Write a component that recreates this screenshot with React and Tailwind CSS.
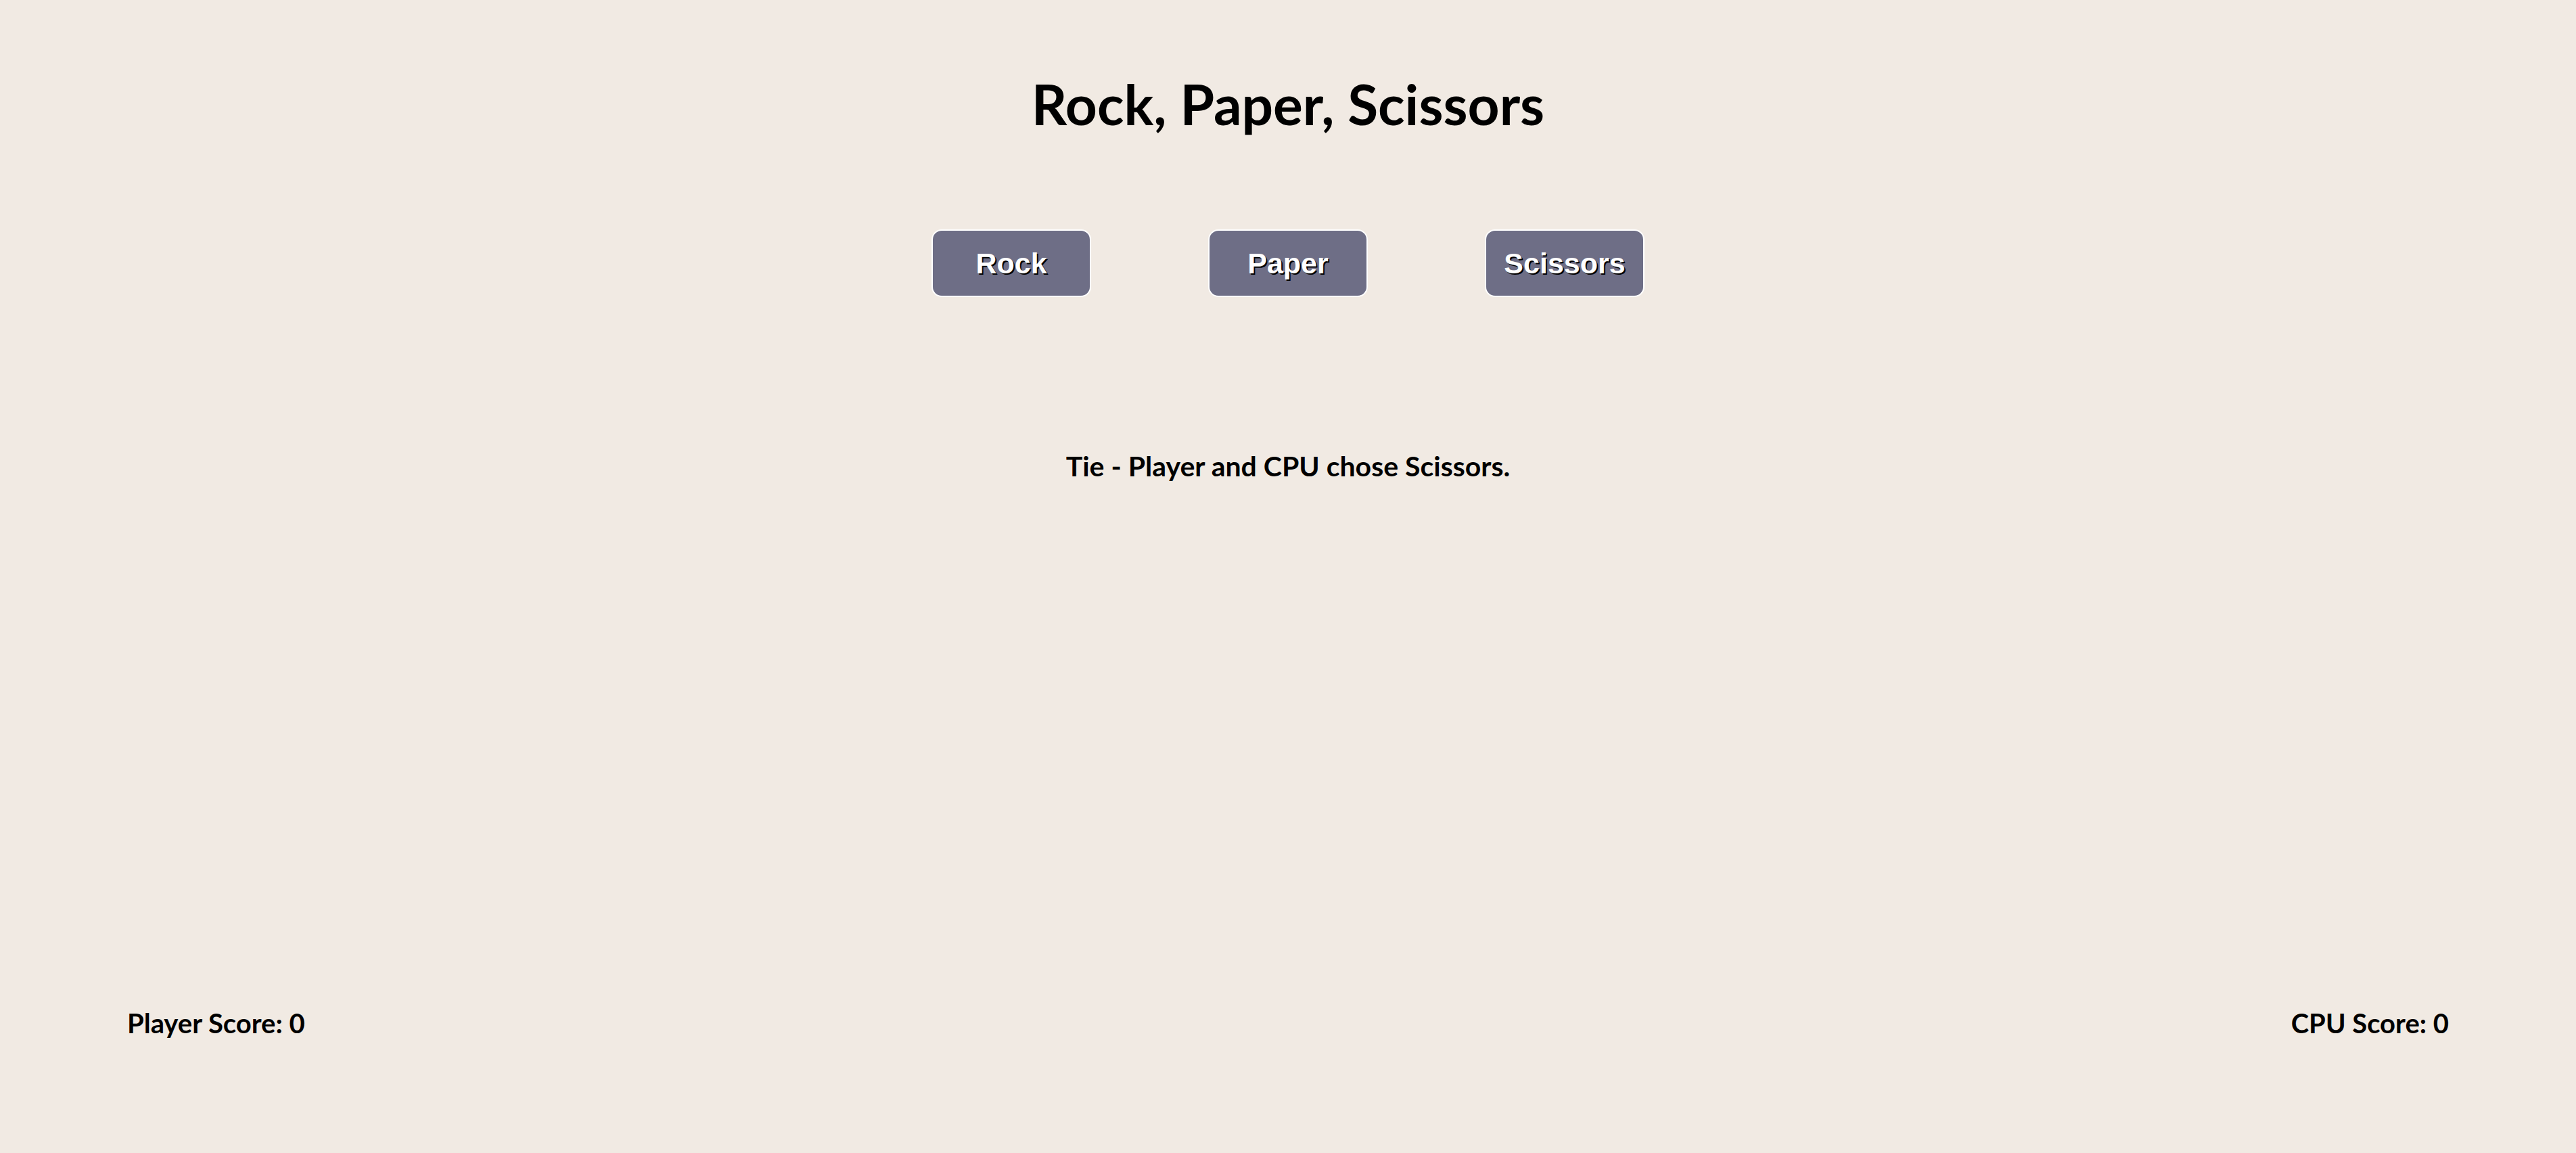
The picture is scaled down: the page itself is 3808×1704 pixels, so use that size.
import React from 'react';

const choices = ['Rock', 'Paper', 'Scissors'];

export default function App() {
	// State
	const [playerScore, setPlayerScore] = React.useState(0);
	const [cpuScore, setCpuScore] = React.useState(0);
	const [message, setMessage] = React.useState('Tie - Player and CPU chose Scissors.');

	const handlePick = (pick) => {
		const cpu = choices[Math.floor(Math.random() * 3)];
		if (pick === cpu) {
			setMessage(`Tie - Player and CPU chose ${pick}.`);
			return;
		}
		const wins = { Rock: 'Scissors', Paper: 'Rock', Scissors: 'Paper' };
		if (wins[pick] === cpu) {
			setPlayerScore((s) => s + 1);
			setMessage(`Player wins - ${pick} beats ${cpu}.`);
		} else {
			setCpuScore((s) => s + 1);
			setMessage(`CPU wins - ${cpu} beats ${pick}.`);
		}
	};

	return (
		<div className="flex flex-col min-h-screen bg-[#f1eae3] text-black font-['Lato',sans-serif] font-bold">
			<h1 className="pt-[112px] text-center text-[82px] leading-[82px]">Rock, Paper, Scissors</h1>

			<div className="flex flex-row justify-center gap-[173px] mt-[145px]">
				{choices.map((choice) => (
					<button
						key={choice}
						onClick={() => handlePick(choice)}
						className="w-[236px] h-[100px] rounded-[15px] border-2 border-white bg-[#6e6e86] text-white text-[43px] font-['Liberation_Sans',Arial,sans-serif] font-bold [text-shadow:2px_2px_0_#000]"
					>
						{choice}
					</button>
				))}
			</div>

			<p className="mt-[229px] text-center text-[41px] leading-[41px]">{message}</p>

			<div className="flex flex-row justify-between mt-auto px-[188px] pb-[172px] text-[40px] leading-[40px]">
				<span>Player Score: {playerScore}</span>
				<span>CPU Score: {cpuScore}</span>
			</div>
		</div>
	);
}
